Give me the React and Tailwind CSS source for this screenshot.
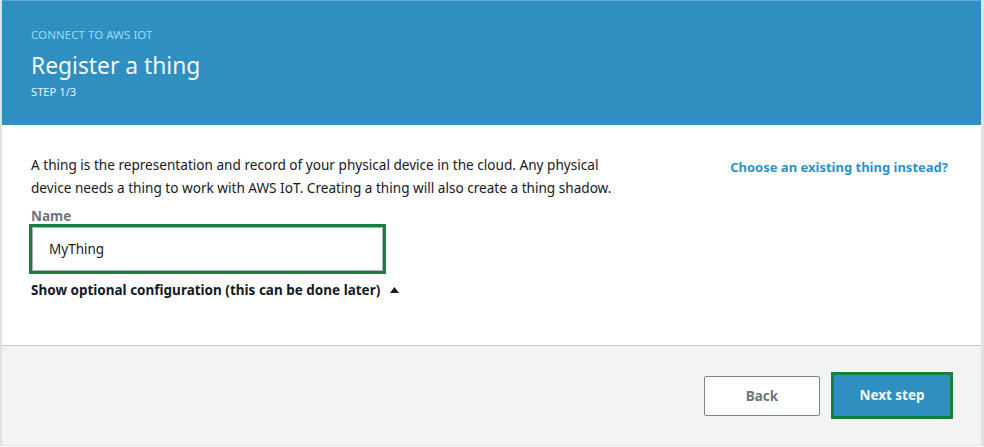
export default function App() {
  return (
    <div className="w-[984px] h-[447px] bg-white" style={{ fontFamily: '"Noto Sans", "Open Sans", sans-serif' }}>
      <div className="w-[984px] h-[446px] border-l-2 border-r-[3px] border-b border-[#e1e1e1] flex flex-col">
        <div className="h-[125px] bg-[#2f8fc1] pl-[29px] pt-[27px] border-t border-[#5aa7d0]">
          <div className="text-[11.6px] leading-[14px] text-[#92dcf6]">CONNECT TO AWS IOT</div>
          <div className="text-[22.8px] leading-[30px] text-[#f1f6f9] mt-[9px]">Register a thing</div>
          <div className="text-[11.2px] leading-[14px] text-[#e9f3f9] mt-[4px]">STEP 1/3</div>
        </div>
        <div className="h-[221px] bg-white border-b border-[#c6c6c6] pl-[29px] pr-[33px] pt-[28px]">
          <div className="flex justify-between">
            <div className="text-[13.6px] leading-[23px] text-[#16191f]">
              A thing is the representation and record of your physical device in the cloud. Any physical
              <br />
              device needs a thing to work with AWS IoT. Creating a thing will also create a thing shadow.
            </div>
            <div className="text-[13px] leading-[23px] font-bold text-[#2b93c8] pt-[3px]">Choose an existing thing instead?</div>
          </div>
          <div className="mt-[9px] text-[13.5px] leading-[16px] font-bold text-[#6f7577]">Name</div>
          <div className="ml-[-2px] w-[357px] h-[50px] border-[3px] border-[#157f3f] bg-white">
            <div className="h-full border border-[#aab3b6] flex items-center pl-[16px] text-[13.5px] text-[#16191f]">MyThing</div>
          </div>
          <div className="mt-[6px] flex items-center text-[13.5px] leading-[20px] font-bold text-[#16191f]">
            Show optional configuration (this can be done later)
            <svg width="9" height="6" viewBox="0 0 9 6" className="ml-[10px]">
              <path d="M0 6 L4.5 0 L9 6 Z" fill="#16191f" />
            </svg>
          </div>
        </div>
        <div className="flex-1 bg-[#f3f3f3] flex justify-end items-start pt-[26px] pr-[28px] gap-[11px]">
          <button className="mt-[4px] w-[116px] h-[40px] bg-white border border-[#7d8586] rounded-[2px] text-[13.5px] font-bold text-[#6f7577]">Back</button>
          <div className="w-[122px] h-[47px] border-[3px] border-[#157f3f] bg-[#2f8fc1] flex items-center justify-center text-[13.5px] font-bold text-[#f4f8fb]">Next step</div>
        </div>
      </div>
    </div>
  );
}
